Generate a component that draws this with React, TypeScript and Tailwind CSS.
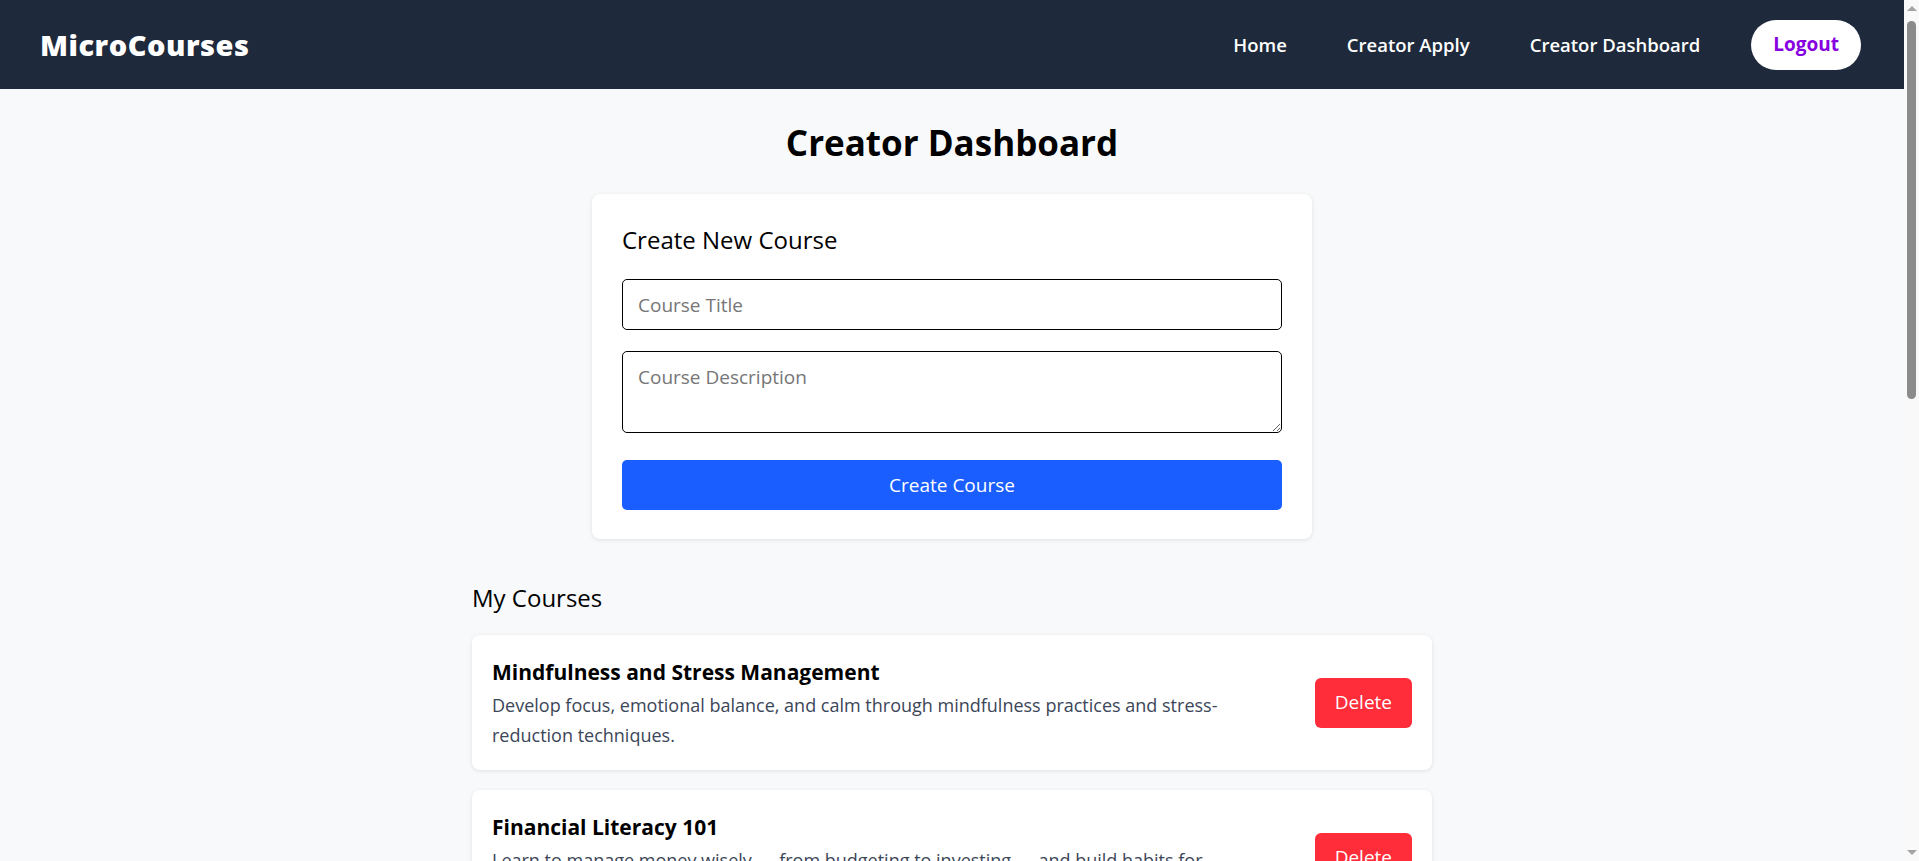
const courses = [
  {
    title: "Mindfulness and Stress Management",
    description:
      "Develop focus, emotional balance, and calm through mindfulness practices and stress-reduction techniques.",
  },
  {
    title: "Financial Literacy 101",
    description:
      "Learn to manage money wisely — from budgeting to investing — and build habits for sustainable financial security.",
  },
  {
    title: "Introduction to Digital Marketing",
    description:
      "Understand the basics of SEO, social media and content strategy to grow an audience online.",
  },
];

const Navbar = () => {
  return (
    <nav className="h-[89px] shrink-0 bg-[#1e293b] flex items-center justify-between pl-10 pr-[43px]">
      <div className="text-white text-[29px] font-extrabold tracking-[0.5px]">MicroCourses</div>
      <div className="flex items-center">
        <a className="text-white text-[18.5px] font-semibold">Home</a>
        <a className="text-white text-[18.5px] font-semibold ml-[60px]">Creator Apply</a>
        <a className="text-white text-[18.5px] font-semibold ml-[60px]">Creator Dashboard</a>
        <button className="ml-[51px] h-[50px] px-[22px] rounded-full bg-white text-[#8600e0] text-[19px] font-bold">
          Logout
        </button>
      </div>
    </nav>
  );
};

const CreateCourseForm = () => {
  return (
    <div className="w-[720px] mx-auto bg-white rounded-lg shadow-[0_1px_4px_rgba(0,0,0,0.1)] px-[30px] pt-[30px] pb-[29px]">
      <h2 className="text-[24px] leading-[32px] font-medium text-black mb-[23px]">Create New Course</h2>
      <input
        type="text"
        placeholder="Course Title"
        className="block w-full h-[51px] border border-black rounded-[5px] px-[15px] text-[19px] placeholder:text-[#767676] mb-[21px] bg-white"
      />
      <textarea
        placeholder="Course Description"
        className="block w-full h-[82px] border border-black rounded-[5px] px-[15px] py-[13px] text-[19px] leading-[24px] placeholder:text-[#767676] mb-[27px] bg-white"
      />
      <button className="block w-full h-[50px] rounded-[5px] bg-[#1a5eff] text-white text-[19px]">
        Create Course
      </button>
    </div>
  );
};

const CourseList = () => {
  return (
    <section className="w-[960px] mx-auto mt-[43px] pb-10">
      <h2 className="text-[24px] leading-[32px] font-medium text-black mb-[21px]">My Courses</h2>
      <div className="flex flex-col gap-5">
        {courses.map((course, index) => (
          <div
            key={index}
            className="bg-white rounded-lg shadow-[0_1px_4px_rgba(0,0,0,0.1)] p-5 flex items-center justify-between gap-5"
          >
            <div className="min-w-0 flex-1">
              <h3 className="text-[21px] leading-[28px] font-bold text-black mt-[3px] mb-[4px]">
                {course.title}
              </h3>
              <p className="text-[18px] leading-[30px] text-[#3b4658]">{course.description}</p>
            </div>
            <button className="shrink-0 h-[50px] px-5 rounded-md bg-[#ff2d3a] text-white text-[19px]">
              Delete
            </button>
          </div>
        ))}
      </div>
    </section>
  );
};

// browser scrollbar as it appears in the screenshot
const Scrollbar = () => {
  return (
    <div className="w-[15px] shrink-0 h-full bg-[#f9f9f9] flex flex-col items-center">
      <div className="h-[17px] flex items-center justify-center">
        <div className="w-0 h-0 border-l-[5px] border-r-[5px] border-b-[5px] border-l-transparent border-r-transparent border-b-[#a3a3a3]" />
      </div>
      <div className="w-[9px] h-[378px] mt-[4px] rounded-full bg-[#8b8b8b]" />
      <div className="flex-1" />
      <div className="h-[17px] flex items-center justify-center">
        <div className="w-0 h-0 border-l-[5px] border-r-[5px] border-t-[5px] border-l-transparent border-r-transparent border-t-[#a3a3a3]" />
      </div>
    </div>
  );
};

export default function App() {
  return (
    <div className="h-screen flex bg-[#f8f9fa] font-['Open_Sans',_sans-serif] overflow-hidden">
      <div className="flex-1 min-w-0 flex flex-col overflow-hidden">
        <Navbar />
        <main>
          <h1 className="text-center text-[35px] leading-[43px] font-bold text-black mt-8 mb-[30px]">
            Creator Dashboard
          </h1>
          <CreateCourseForm />
          <CourseList />
        </main>
      </div>
      <Scrollbar />
    </div>
  );
}
